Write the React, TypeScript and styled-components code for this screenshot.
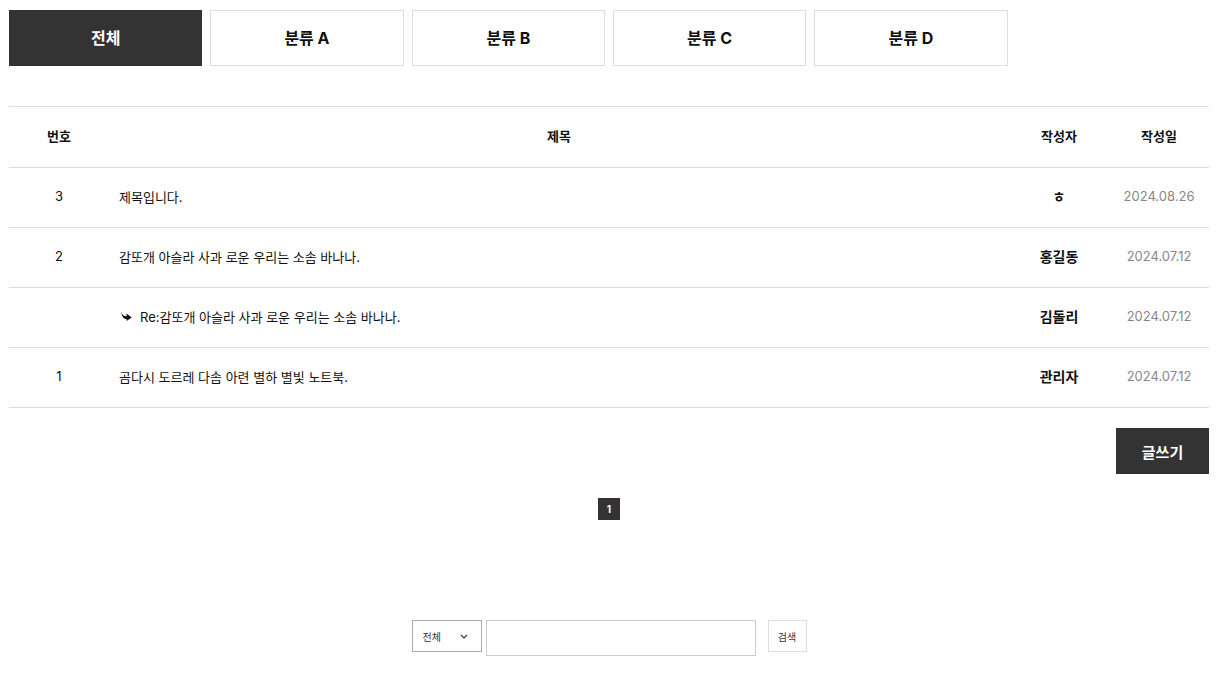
import styled, { createGlobalStyle } from "styled-components";

const GlobalStyle = createGlobalStyle`
  body {
    margin: 0;
    background: #fff;
    font-family: Inter, "Noto Sans CJK KR", sans-serif;
    color: #111;
  }
  * { box-sizing: border-box; }
`;

type Post = {
  no?: number;
  title: string;
  author: string;
  date: string;
  reply?: boolean;
};

const posts: Post[] = [
  { no: 3, title: "제목입니다.", author: "ㅎ", date: "2024.08.26" },
  { no: 2, title: "감또개 아슬라 사과 로운 우리는 소솜 바나나.", author: "홍길동", date: "2024.07.12" },
  { title: "Re:감또개 아슬라 사과 로운 우리는 소솜 바나나.", author: "김돌리", date: "2024.07.12", reply: true },
  { no: 1, title: "곰다시 도르레 다솜 아련 별하 별빛 노트북.", author: "관리자", date: "2024.07.12" },
];

const tabs = ["전체", "분류 A", "분류 B", "분류 C", "분류 D"];

const Page = styled.div`
  width: 1200px;
  margin: 0 9px;
  padding-top: 10px;
`;

const Tabs = styled.div`
  display: grid;
  grid-template-columns: repeat(6, 1fr);
  gap: 8px;
  margin-bottom: 40px;
`;

const Tab = styled.button<{ $active?: boolean }>`
  height: 56px;
  border: 1px solid ${(p) => (p.$active ? "#333" : "#ddd")};
  background: ${(p) => (p.$active ? "#333" : "#fff")};
  color: ${(p) => (p.$active ? "#fff" : "#111")};
  font-family: inherit;
  font-size: 16px;
  font-weight: 700;
  cursor: pointer;
  padding: 0 0 2px;
`;

const Table = styled.div`
  border-top: 1px solid #ddd;
`;

const Row = styled.div<{ $head?: boolean }>`
  display: grid;
  grid-template-columns: 100px 1fr 100px 100px;
  align-items: center;
  height: ${(p) => (p.$head ? "61px" : "60px")};
  border-bottom: 1px solid #ddd;
  font-size: 13px;
  padding-bottom: 3px;
  font-weight: ${(p) => (p.$head ? 700 : 400)};
`;

const Cell = styled.div<{ $center?: boolean; $bold?: boolean; $muted?: boolean }>`
  text-align: ${(p) => (p.$center ? "center" : "left")};
  font-weight: ${(p) => (p.$bold ? 700 : "inherit")};
  color: ${(p) => (p.$muted ? "#888" : "#111")};
  font-size: ${(p) => (p.$bold ? "14px" : "inherit")};
`;

const TitleCell = styled.div<{ $reply?: boolean }>`
  display: flex;
  align-items: center;
  gap: 8px;
  padding-left: ${(p) => (p.$reply ? "12px" : "10px")};
`;

const Actions = styled.div`
  display: flex;
  justify-content: flex-end;
  padding-top: 20px;
`;

const WriteButton = styled.button`
  width: 93px;
  height: 46px;
  border: 0;
  background: #333;
  color: #fff;
  font-family: inherit;
  font-size: 15px;
  font-weight: 700;
  cursor: pointer;
`;

const Pagination = styled.div`
  display: flex;
  justify-content: center;
  gap: 4px;
  margin-top: 24px;
`;

const PageNum = styled.span<{ $current?: boolean }>`
  width: 22px;
  height: 22px;
  display: flex;
  align-items: center;
  justify-content: center;
  background: ${(p) => (p.$current ? "#333" : "#fff")};
  color: ${(p) => (p.$current ? "#fff" : "#333")};
  font-size: 10px;
  font-weight: 700;
`;

const Search = styled.form`
  display: flex;
  justify-content: center;
  align-items: flex-start;
  margin-top: 100px;
`;

const Select = styled.div`
  width: 70px;
  height: 32px;
  border: 1px solid #aaa;
  display: flex;
  align-items: center;
  justify-content: space-between;
  padding: 0 13px 0 10px;
  font-size: 10px;
  color: #333;
`;

const Input = styled.input`
  width: 270px;
  height: 36px;
  margin-left: 4px;
  border: 1px solid #ccc;
  outline: none;
`;

const SearchButton = styled.button`
  width: 39px;
  height: 32px;
  margin-left: 12px;
  border: 1px solid #ddd;
  background: #fff;
  font-family: inherit;
  font-size: 10px;
  color: #333;
  padding: 0;
`;

const ReplyIcon = () => (
  <svg width="11" height="10" viewBox="0 0 11 10">
    <path d="M0.3 0.5 C1 4 2.8 5.2 5.6 5.2 L5.6 2.6 L10.7 6.6 L5.6 10 L5.6 8 C2.6 8 0.6 5.5 0.3 0.5 Z" fill="#111" />
  </svg>
);

const Chevron = () => (
  <svg width="8" height="5" viewBox="0 0 8 5">
    <path d="M1 1 L4 4 L7 1" fill="none" stroke="#333" strokeWidth="1.1" />
  </svg>
);

export default function App() {
  return (
    <>
      <GlobalStyle />
      <Page>
        <Tabs>
          {tabs.map((t, i) => (
            <Tab key={t} $active={i === 0}>
              {t}
            </Tab>
          ))}
        </Tabs>

        <Table>
          <Row $head>
            <Cell $center>번호</Cell>
            <Cell $center>제목</Cell>
            <Cell $center>작성자</Cell>
            <Cell $center>작성일</Cell>
          </Row>
          {posts.map((p) => (
            <Row key={p.title}>
              <Cell $center>{p.no ?? ""}</Cell>
              <TitleCell $reply={p.reply}>
                {p.reply && <ReplyIcon />}
                {p.title}
              </TitleCell>
              <Cell $center $bold>
                {p.author}
              </Cell>
              <Cell $center $muted>
                {p.date}
              </Cell>
            </Row>
          ))}
        </Table>

        <Actions>
          <WriteButton>글쓰기</WriteButton>
        </Actions>

        <Pagination>
          <PageNum $current>1</PageNum>
        </Pagination>

        <Search onSubmit={(e) => e.preventDefault()}>
          <Select>
            전체
            <Chevron />
          </Select>
          <Input type="text" />
          <SearchButton type="submit">검색</SearchButton>
        </Search>
      </Page>
    </>
  );
}
